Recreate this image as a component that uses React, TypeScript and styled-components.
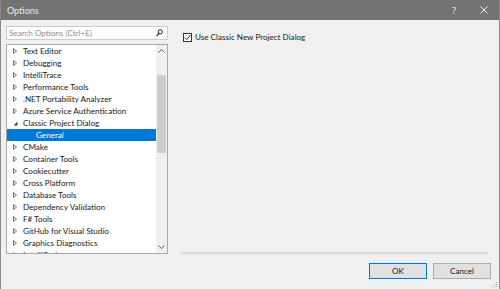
import * as React from 'react'
import styled, { createGlobalStyle } from 'styled-components'

const GlobalStyle = createGlobalStyle`
  html, body { margin: 0; padding: 0; background: #f0f0f0; }
  body { font-family: Lato, "Noto Sans", sans-serif; }
`

const Window = styled.div`
  position: relative;
  width: 500px;
  height: 289px;
  box-sizing: border-box;
  background: #f0f0f0;
  border-left: 1px solid #8a8a8a;
  border-right: 1px solid #8a8a8a;
  display: flex;
  flex-direction: column;
  font-size: 8.1px;
  color: #1a1a1a;
  overflow: hidden;
`

const TitleBar = styled.div`
  height: 20px;
  background: #737373;
  color: #ececec;
  display: flex;
  align-items: center;
  padding-left: 6px;
  font-size: 9px;
  flex-shrink: 0;
`

const Title = styled.span`
  flex: 1;
`

const TitleButton = styled.span`
  width: 30px;
  display: flex;
  justify-content: center;
  align-items: center;
  color: #e8e8e8;
  font-size: 10px;
`

const Body = styled.div`
  display: flex;
  height: 234px;
`

const LeftColumn = styled.div`
  width: 162px;
  margin-left: 5px;
  padding-top: 6px;
  display: flex;
  flex-direction: column;
  gap: 4px;
`

const SearchBox = styled.div`
  height: 14px;
  box-sizing: border-box;
  border: 1px solid #c9cbcf;
  background: #fff;
  display: flex;
  align-items: center;
  padding: 0 4px 0 2px;
  color: #8d8d8d;
`

const SearchText = styled.span`
  flex: 1;
`

const Tree = styled.div`
  height: 210px;
  box-sizing: border-box;
  border: 1px solid #a9a9a9;
  background: #fff;
  display: flex;
  overflow: hidden;
`

const TreeList = styled.div`
  flex: 1;
  display: flex;
  flex-direction: column;
`

const Row = styled.div<{ $selected?: boolean; $indent?: boolean }>`
  height: 12px;
  flex-shrink: 0;
  display: flex;
  align-items: center;
  padding-left: ${p => (p.$indent ? 29 : 6)}px;
  background: ${p => (p.$selected ? '#0078d7' : 'transparent')};
  color: ${p => (p.$selected ? '#fff' : '#1a1a1a')};
  white-space: nowrap;
`

const Arrow = styled.span`
  width: 10px;
  display: flex;
  align-items: center;
`

const ScrollBar = styled.div`
  width: 11px;
  background: #f0f0f0;
  display: flex;
  flex-direction: column;
  align-items: center;
`

const ScrollButton = styled.div`
  height: 12px;
  display: flex;
  align-items: center;
  justify-content: center;
`

const ScrollTrack = styled.div`
  flex: 1;
  width: 9px;
  padding-top: 18px;
`

const ScrollThumb = styled.div`
  height: 78px;
  background: #cdcdcd;
`

const RightColumn = styled.div`
  flex: 1;
  margin-left: 15px;
  margin-right: 11px;
  display: flex;
  flex-direction: column;
`

const OptionRow = styled.label`
  margin-top: 12px;
  display: flex;
  align-items: center;
  gap: 3px;
  height: 10px;
`

const CheckBox = styled.span`
  width: 9px;
  height: 9px;
  box-sizing: border-box;
  border: 1px solid #333;
  background: #fff;
  display: flex;
  align-items: center;
  justify-content: center;
`

const Spacer = styled.div`
  flex: 1;
`

const Separator = styled.div`
  height: 2px;
  margin-left: -3px;
  background: #dcdcdc;
`

const ButtonRow = styled.div`
  display: flex;
  justify-content: flex-end;
  gap: 6px;
  padding: 9px 8px 0 0;
`

const Button = styled.button<{ $primary?: boolean }>`
  width: 58px;
  height: 16px;
  box-sizing: border-box;
  margin: 0;
  padding: 0;
  font-family: inherit;
  font-size: 8.1px;
  color: #1a1a1a;
  background: #e1e1e1;
  border: 1px solid ${p => (p.$primary ? '#0078d7' : '#adadad')};
`

const Grip = styled.svg`
  position: absolute;
  right: 1px;
  bottom: 1px;
`

const RightArrow = () => (
  <svg width='4' height='6' viewBox='0 0 4 6'>
    <path d='M0.5 0.5 L3.5 3 L0.5 5.5 Z' fill='none' stroke='#6e6e6e' strokeWidth='1' />
  </svg>
)

const DownArrow = () => (
  <svg width='5' height='5' viewBox='0 0 5 5'>
    <path d='M4.5 0.5 L4.5 4.5 L0.5 4.5 Z' fill='#444' />
  </svg>
)

const treeItems = [
  'Text Editor',
  'Debugging',
  'IntelliTrace',
  'Performance Tools',
  '.NET Portability Analyzer',
  'Azure Service Authentication',
  'Classic Project Dialog',
  'General',
  'CMake',
  'Container Tools',
  'Cookiecutter',
  'Cross Platform',
  'Database Tools',
  'Dependency Validation',
  'F# Tools',
  'GitHub for Visual Studio',
  'Graphics Diagnostics',
  'IntelliCode',
]

export default function App() {
  return (
    <>
      <GlobalStyle />
      <Window>
        <TitleBar>
          <Title>Options</Title>
          <TitleButton>?</TitleButton>
          <TitleButton>
            <svg width='8' height='8' viewBox='0 0 8 8'>
              <path d='M0.5 0.5 L7.5 7.5 M7.5 0.5 L0.5 7.5' stroke='#eee' strokeWidth='1' />
            </svg>
          </TitleButton>
        </TitleBar>
        <Body>
          <LeftColumn>
            <SearchBox>
              <SearchText>Search Options (Ctrl+E)</SearchText>
              <svg width='7' height='8' viewBox='0 0 7 8'>
                <circle cx='4.3' cy='2.8' r='2.1' fill='none' stroke='#1e1e1e' strokeWidth='1' />
                <path d='M3 4.3 L0.6 7.2' stroke='#1e1e1e' strokeWidth='1.2' />
              </svg>
            </SearchBox>
            <Tree>
              <TreeList>
                {treeItems.map(item => {
                  if (item === 'General') {
                    return <Row key={item} $selected $indent>{item}</Row>
                  }
                  return (
                    <Row key={item}>
                      <Arrow>{item === 'Classic Project Dialog' ? <DownArrow /> : <RightArrow />}</Arrow>
                      {item}
                    </Row>
                  )
                })}
              </TreeList>
              <ScrollBar>
                <ScrollButton>
                  <svg width='7' height='4' viewBox='0 0 7 4'>
                    <path d='M0.5 3.5 L3.5 0.5 L6.5 3.5' fill='none' stroke='#606060' strokeWidth='1' />
                  </svg>
                </ScrollButton>
                <ScrollTrack>
                  <ScrollThumb />
                </ScrollTrack>
                <ScrollButton>
                  <svg width='7' height='4' viewBox='0 0 7 4'>
                    <path d='M0.5 0.5 L3.5 3.5 L6.5 0.5' fill='none' stroke='#606060' strokeWidth='1' />
                  </svg>
                </ScrollButton>
              </ScrollBar>
            </Tree>
          </LeftColumn>
          <RightColumn>
            <OptionRow>
              <CheckBox>
                <svg width='7' height='7' viewBox='0 0 7 7'>
                  <path d='M0.8 3.6 L2.8 5.6 L6.4 1' fill='none' stroke='#333' strokeWidth='1' />
                </svg>
              </CheckBox>
              Use Classic New Project Dialog
            </OptionRow>
            <Spacer />
            <Separator />
          </RightColumn>
        </Body>
        <ButtonRow>
          <Button $primary>OK</Button>
          <Button>Cancel</Button>
        </ButtonRow>
        <Grip width='6' height='6' viewBox='0 0 6 6'>
          <rect x='4' y='0' width='1' height='1' fill='#b0b0b0' />
          <rect x='2' y='2' width='1' height='1' fill='#b0b0b0' />
          <rect x='4' y='2' width='1' height='1' fill='#b0b0b0' />
          <rect x='0' y='4' width='1' height='1' fill='#b0b0b0' />
          <rect x='2' y='4' width='1' height='1' fill='#b0b0b0' />
          <rect x='4' y='4' width='1' height='1' fill='#b0b0b0' />
        </Grip>
      </Window>
    </>
  )
}
